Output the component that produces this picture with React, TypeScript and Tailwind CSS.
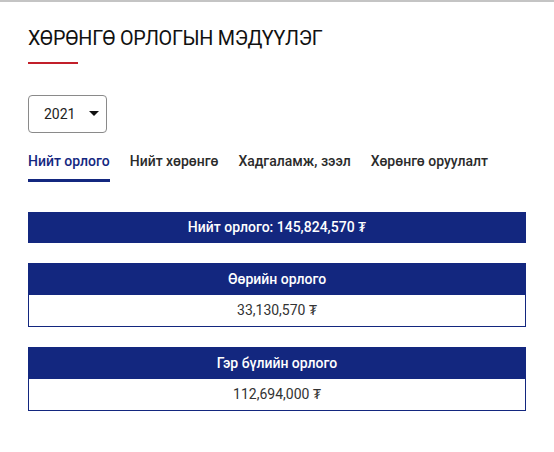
import { useState } from "react";

const tabs = ["Нийт орлого", "Нийт хөрөнгө", "Хадгаламж, зээл", "Хөрөнгө оруулалт"];

const cards = [
  { title: "Өөрийн орлого", amount: "33,130,570" },
  { title: "Гэр бүлийн орлого", amount: "112,694,000" },
];

export default function App() {
  const [active, setActive] = useState(0);

  return (
    <div
      className="min-h-[452px] bg-white border-t-2 border-[#c4c4c4] px-7 text-[#212121]"
      style={{ fontFamily: "Roboto, 'Noto Sans', sans-serif" }}
    >
      {/* Title */}
      <h1 className="pt-[22px] text-[21px] leading-[28px] tracking-[-0.3px] uppercase font-normal text-[#111] [transform:scaleX(0.94)] origin-left">
        Хөрөнгө орлогын мэдүүлэг
      </h1>
      <div className="mt-[10px] h-[2px] w-[50px] bg-[#c21f2a]" />

      {/* Year select */}
      <button className="mt-[31px] flex h-[38px] w-[79px] items-center rounded-[4px] border border-[#8a8a8a] pl-[15px] text-[14px] text-[#222]">
        2021
        <svg className="ml-[14px]" width="10" height="6" viewBox="0 0 10 6">
          <path d="M0 0 L10 0 L5 5 Z" fill="#111" />
        </svg>
      </button>

      {/* Tabs */}
      <div className="mt-[20px] flex gap-5">
        {tabs.map((t, i) => (
          <button
            key={t}
            onClick={() => setActive(i)}
            className={
              "pb-[10px] text-[14px] font-medium leading-4 border-b-[3px] " +
              (active === i ? "border-[#13277f] text-[#13277f]" : "border-transparent text-[#2b2b2b]")
            }
          >
            {t}
          </button>
        ))}
      </div>

      {/* Total */}
      <div className="mt-[30px] flex h-[31px] items-center justify-center bg-[#13277f] text-[14px] font-medium text-white">
        Нийт орлого: 145,824,570 ₮
      </div>

      {/* Cards */}
      {cards.map((c) => (
        <div key={c.title} className="mt-[20px] border border-[#13277f]">
          <div className="flex h-[31px] items-center justify-center bg-[#13277f] text-[14px] font-medium text-white">
            {c.title}
          </div>
          <div className="flex h-[31px] items-center justify-center text-[14px] text-[#333]">
            {c.amount} ₮
          </div>
        </div>
      ))}
    </div>
  );
}
